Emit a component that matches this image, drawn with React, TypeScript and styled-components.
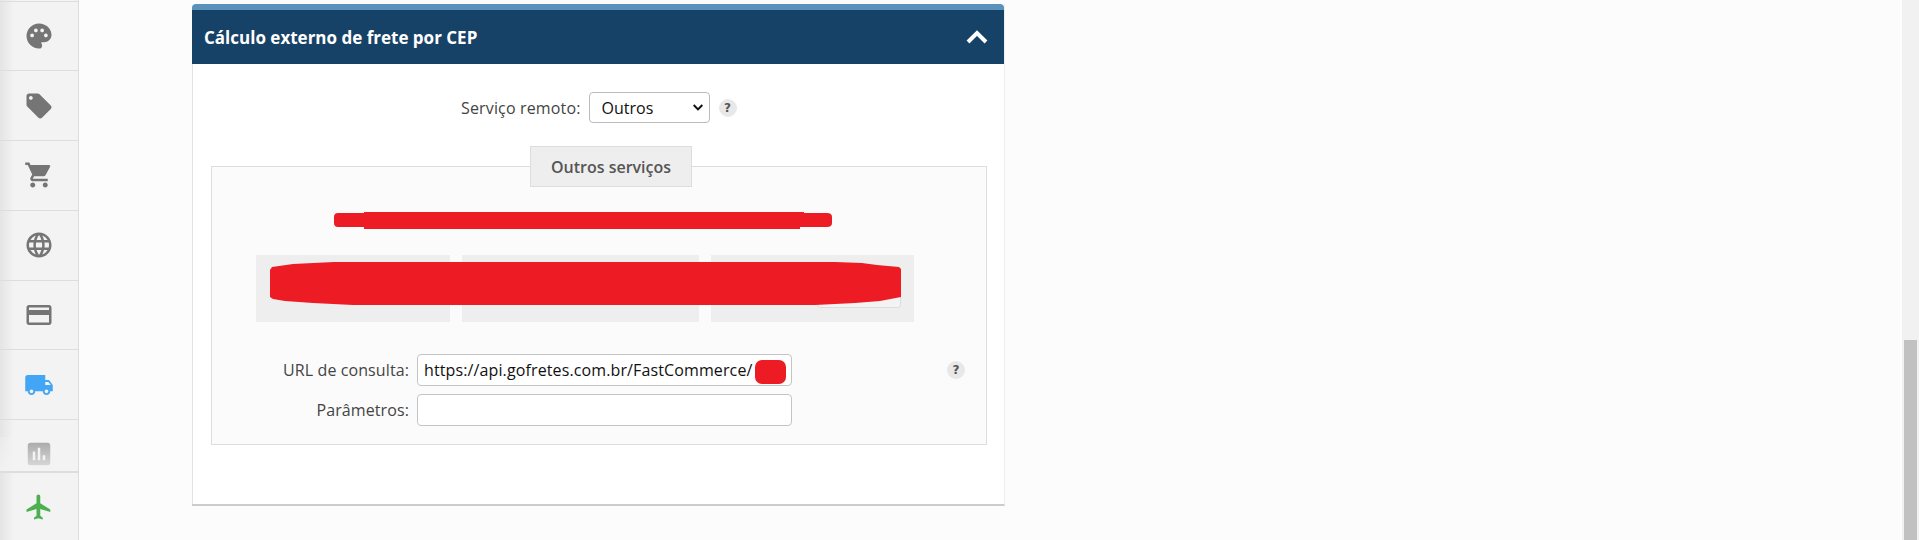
import React from "react";
import styled, { createGlobalStyle } from "styled-components";
import {
  MdPalette,
  MdLocalOffer,
  MdShoppingCart,
  MdLanguage,
  MdCreditCard,
  MdLocalShipping,
  MdAssessment,
  MdFlight,
} from "react-icons/md";

const GlobalStyle = createGlobalStyle`
  html, body {
    margin: 0;
    height: 100%;
    overflow: hidden;
    background: #fcfcfc;
    font-family: "Open Sans", sans-serif;
    color: #444;
  }
  * { box-sizing: border-box; }
`;

const Page = styled.div`
  display: flex;
  width: 1919px;
  height: 540px;
  overflow: hidden;
`;

const Sidebar = styled.nav`
  position: relative;
  display: flex;
  flex-direction: column;
  width: 79px;
  flex: none;
  background: linear-gradient(to right, #e4e4e4 0, #f3f3f3 14px);
  border-right: 1px solid #ddd;
`;

const SideList = styled.div`
  position: relative;
  height: 471px;
  padding-top: 0.6px;
  overflow: hidden;

  &::after {
    content: "";
    position: absolute;
    left: 0;
    right: 0;
    bottom: 0;
    height: 34px;
    background: linear-gradient(rgba(243, 243, 243, 0.35), rgba(243, 243, 243, 0.85));
  }
`;

const SideItem = styled.a<{ $color?: string }>`
  display: flex;
  align-items: center;
  justify-content: center;
  height: 69.75px;
  flex: none;
  border-top: 1px solid #ddd;
  color: ${(p) => p.$color || "#757575"};
  font-size: 30px;
`;

const BottomItem = styled(SideItem)`
  height: 69px;
  border-top: 2px solid #ddd;
`;

const Main = styled.main`
  flex: 1;
  padding: 4px 0 0 113px;
`;

const Panel = styled.section`
  width: 813px;
  height: 502px;
  display: flex;
  flex-direction: column;
  background: #fff;
  border-right: 1px solid #eee;
  border-bottom: 2px solid #ccc;
`;

const PanelHeader = styled.header`
  display: flex;
  align-items: center;
  justify-content: space-between;
  height: 60px;
  padding: 0 16px 0 12px;
  background: #174267;
  border-top: 6px solid #5b92bb;
  border-radius: 4px 4px 0 0;
  color: #fff;
`;

const PanelTitle = styled.h2`
  margin: 0;
  font-size: 17px;
  font-weight: 700;
`;

const PanelBody = styled.div`
  flex: 1;
  padding: 0 17px 0 18px;
  border-left: 1px solid #e3e3e3;
`;

const ServiceRow = styled.div`
  display: flex;
  align-items: center;
  height: 31px;
  margin-top: 28px;
  padding-left: 250px;
`;

const RowLabel = styled.label`
  font-size: 16px;
  letter-spacing: 0.15px;
  color: #444;
  white-space: nowrap;
`;

const SelectBox = styled.div`
  display: flex;
  align-items: center;
  justify-content: space-between;
  width: 121px;
  height: 31px;
  margin-left: 8px;
  padding: 0 6px 0 12px;
  background: #fff;
  border: 1px solid #bbb;
  border-radius: 4px;
  font-size: 16px;
  color: #111;
`;

const Help = styled.span<{ $left?: number }>`
  display: flex;
  align-items: center;
  justify-content: center;
  width: 18px;
  height: 18px;
  flex: none;
  margin-left: ${(p) => p.$left ?? 9}px;
  border-radius: 50%;
  background: #e8e8e8;
  color: #555;
  font-family: "DejaVu Sans", sans-serif;
  font-size: 12px;
  font-weight: 700;
`;

const ServicesBox = styled.fieldset`
  position: relative;
  width: 776px;
  height: 279px;
  margin: 43px 0 0;
  padding: 0;
  background: #fbfbfb;
  border: 1px solid #ddd;
`;

const Legend = styled.div`
  position: absolute;
  top: -21px;
  left: 318px;
  display: flex;
  align-items: center;
  justify-content: center;
  width: 162px;
  height: 41px;
  background: #eee;
  border: 1px solid #ddd;
  font-size: 16px;
  font-weight: 600;
  color: #555;
`;

const Redacted = styled.svg`
  position: absolute;
  fill: #ed1c24;
`;

const Cells = styled.div`
  display: grid;
  grid-template-columns: 194px 237px 203px;
  column-gap: 12px;
  height: 67px;
  margin: 88px 0 0 44px;
`;

const Cell = styled.div`
  position: relative;
  background: #eee;
`;

const HiddenInput = styled.div`
  position: absolute;
  right: 13px;
  bottom: 14px;
  width: 84px;
  height: 30px;
  background: #f3f3f3;
  border: 1px solid #ddd;
  border-radius: 3px;
`;

const FormRows = styled.div`
  display: flex;
  flex-direction: column;
  gap: 8px;
  margin-top: 32px;
`;

const FormRow = styled.div`
  display: flex;
  align-items: center;
`;

const FormLabel = styled.label`
  width: 205px;
  padding-right: 8px;
  text-align: right;
  font-size: 16px;
  letter-spacing: 0.1px;
  color: #444;
`;

const TextField = styled.div`
  position: relative;
  width: 375px;
  height: 32px;
  display: flex;
  align-items: center;
  padding-left: 6px;
  background: #fff;
  border: 1px solid #c4c4c4;
  border-radius: 4px;
  font-size: 16px;
  letter-spacing: 0.12px;
  color: #111;
  white-space: nowrap;
`;

const RedactedTag = styled.span`
  position: absolute;
  top: 5px;
  right: 5px;
  width: 31px;
  height: 24px;
  border-radius: 7px;
  background: #ed1c24;
`;

const Scrollbar = styled.aside`
  width: 17px;
  flex: none;
  padding: 340px 2px 0;
  background: #f1f1f1;
`;

const ScrollThumb = styled.div`
  height: 200px;
  background: #c1c1c1;
`;

const sideItems = [
  { icon: <MdPalette /> },
  { icon: <MdLocalOffer /> },
  { icon: <MdShoppingCart /> },
  { icon: <MdLanguage /> },
  { icon: <MdCreditCard /> },
  { icon: <MdLocalShipping />, color: "#42a5f5" },
  { icon: <MdAssessment /> },
];

const App = () => {
  return (
    <Page>
      <GlobalStyle />
      <Sidebar>
        <SideList>
          {sideItems.map((item, i) => (
            <SideItem key={i} $color={item.color}>
              {item.icon}
            </SideItem>
          ))}
        </SideList>
        <BottomItem $color="#4caf50">
          <MdFlight />
        </BottomItem>
      </Sidebar>
      <Main>
        <Panel>
          <PanelHeader>
            <PanelTitle>Cálculo externo de frete por CEP</PanelTitle>
            <svg width="22" height="14" viewBox="0 0 22 14" fill="none" stroke="#fff" strokeWidth="4">
              <path d="M2 12L11 3L20 12" />
            </svg>
          </PanelHeader>
          <PanelBody>
            <ServiceRow>
              <RowLabel>Serviço remoto:</RowLabel>
              <SelectBox>
                Outros
                <svg width="10" height="7" viewBox="0 0 10 7" fill="none" stroke="#111" strokeWidth="2">
                  <path d="M0.7 1L5 5.4L9.3 1" />
                </svg>
              </SelectBox>
              <Help>?</Help>
            </ServiceRow>
            <ServicesBox>
              <Legend>Outros serviços</Legend>
              <Redacted
                width="498"
                height="17"
                viewBox="0 0 498 17"
                style={{ left: 122, top: 45 }}
              >
                <path d="M4 1H30V0H470V1H493Q498 1 498 5V11Q498 15 493 15H466V17H30V15H4Q0 15 0 11V5Q0 1 4 1Z" />
              </Redacted>
              <Cells>
                <Cell />
                <Cell />
                <Cell>
                  <HiddenInput />
                </Cell>
              </Cells>
              <Redacted
                width="631"
                height="43"
                viewBox="0 0 631 43"
                style={{ left: 58, top: 95 }}
              >
                <path d="M0 8L2 5L23 2L64 0H565L592 1L607 3L629 5L631 7V35L610 39L585 41L545 43H83L43 41L15 39L3 37L0 35Z" />
              </Redacted>
              <FormRows>
                <FormRow>
                  <FormLabel>URL de consulta:</FormLabel>
                  <TextField>
                    https://api.gofretes.com.br/FastCommerce/
                    <RedactedTag />
                  </TextField>
                  <Help $left={155}>?</Help>
                </FormRow>
                <FormRow>
                  <FormLabel>Parâmetros:</FormLabel>
                  <TextField />
                </FormRow>
              </FormRows>
            </ServicesBox>
          </PanelBody>
        </Panel>
      </Main>
      <Scrollbar>
        <ScrollThumb />
      </Scrollbar>
    </Page>
  );
};

export default App;
